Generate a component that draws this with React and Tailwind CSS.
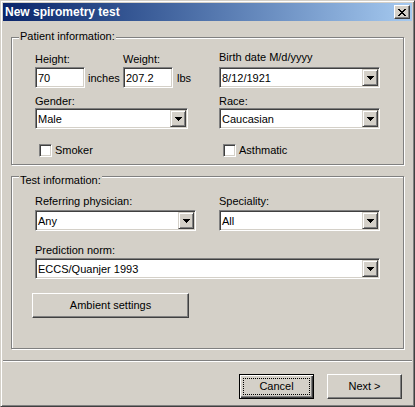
const sunken =
  'border border-t-[#808080] border-l-[#808080] border-r-white border-b-white shadow-[inset_1px_1px_0_#404040,inset_-1px_-1px_0_#d4d0c8]';
const raised =
  'border border-t-white border-l-white border-r-[#404040] border-b-[#404040] shadow-[inset_-1px_-1px_0_#808080]';
const dropRaised =
  'border border-t-[#d4d0c8] border-l-[#d4d0c8] border-r-[#404040] border-b-[#404040] shadow-[inset_1px_1px_0_#fff,inset_-1px_-1px_0_#808080]';
const etched = 'border border-[#808080] shadow-[inset_1px_1px_0_#fff,1px_1px_0_#fff]';

function CloseGlyph() {
  const rows = ['11000011', '01100110', '00111100', '00011000', '00111100', '01100110', '11000011'];
  return (
    <svg width="8" height="7" viewBox="0 0 8 7" shapeRendering="crispEdges">
      {rows.map((r, y) =>
        r.split('').map((c, x) => (c === '1' ? <rect key={`${x}-${y}`} x={x} y={y} width="1" height="1" fill="#000" /> : null))
      )}
    </svg>
  );
}

function Arrow() {
  return (
    <svg width="7" height="4" viewBox="0 0 7 4" shapeRendering="crispEdges">
      <rect x="0" y="0" width="7" height="1" fill="#000" />
      <rect x="1" y="1" width="5" height="1" fill="#000" />
      <rect x="2" y="2" width="3" height="1" fill="#000" />
      <rect x="3" y="3" width="1" height="1" fill="#000" />
    </svg>
  );
}

function Edit({ value, width }) {
  return (
    <div className={`${sunken} bg-white h-[21px] flex items-center pl-[2px] pt-px ${width}`}>
      <span className="leading-[13px]">{value}</span>
    </div>
  );
}

function Combo({ value, width }) {
  return (
    <div className={`${sunken} bg-white h-[21px] flex items-center p-px ${width}`}>
      <span className="flex-1 pl-px pt-[2px] leading-[13px]">{value}</span>
      <div className={`${dropRaised} w-[16px] h-[17px] flex items-center justify-center bg-[#d4d0c8]`}>
        <Arrow />
      </div>
    </div>
  );
}

function Check({ label }) {
  return (
    <div className="flex items-center gap-[3px] h-[13px]">
      <div className={`${sunken} bg-white w-[13px] h-[13px]`}></div>
      <span className="leading-[13px]">{label}</span>
    </div>
  );
}

function Label({ children, className = '' }) {
  return <div className={`leading-[13px] ${className}`}>{children}</div>;
}

function Group({ title, titleTop, className, children }) {
  return (
    <div className={`relative ml-[8px] w-[393px] pl-[23px] ${etched} ${className}`}>
      <span className={`absolute ${titleTop} left-[7px] px-px bg-[#d4d0c8] leading-[13px]`}>{title}</span>
      {children}
    </div>
  );
}

function Button({ children, width, isDefault }) {
  if (isDefault) {
    return (
      <div
        className={`${width} h-[25px] border border-black shadow-[inset_1px_1px_0_#fff,inset_-1px_-1px_0_#404040,inset_-2px_-2px_0_#808080] p-[3px] flex`}
      >
        <div className="flex-1 border border-dotted border-black flex items-center justify-center leading-[13px]">
          {children}
        </div>
      </div>
    );
  }
  return (
    <div className={`${raised} ${width} h-[25px] flex items-center justify-center leading-[13px]`}>{children}</div>
  );
}

export default function App() {
  return (
    <div className="w-[415px] h-[407px] bg-[#d4d0c8] border border-t-[#d4d0c8] border-l-[#d4d0c8] border-r-[#404040] border-b-[#404040] shadow-[inset_1px_1px_0_#fff,inset_-1px_-1px_0_#808080] p-[2px] flex flex-col font-['Liberation_Sans',Arial,sans-serif] text-[11px] text-black select-none">
      <div className="h-[18px] flex items-center bg-linear-to-r from-[#0a246a] to-[#a6caf0] pl-[2px] pr-[2px]">
        <span className="flex-1 text-white font-bold text-[12px] leading-[18px]">New spirometry test</span>
        <div className={`${raised} bg-[#d4d0c8] w-[16px] h-[14px] flex items-center justify-center`}>
          <CloseGlyph />
        </div>
      </div>

      <Group title="Patient information:" titleTop="-top-[8px]" className="mt-[16px] h-[128px] pt-[13px]">
        <div className="flex">
          <div className="w-[184px] flex items-end">
            <div className="w-[50px]">
              <Label className="mt-[2px] mb-px">Height:</Label>
              <Edit value="70" width="w-[50px]" />
            </div>
            <span className="w-[38px] pl-[3px] pb-[3px] leading-[13px]">inches</span>
            <div className="w-[50px]">
              <Label className="mt-[2px] mb-px">Weight:</Label>
              <Edit value="207.2" width="w-[50px]" />
            </div>
            <span className="pl-[4px] pb-[3px] leading-[13px]">lbs</span>
          </div>
          <div>
            <Label className="mb-[3px]">Birth date M/d/yyyy</Label>
            <Combo value="8/12/1921" width="w-[161px]" />
          </div>
        </div>

        <div className="flex mt-[7px]">
          <div className="w-[184px]">
            <Label>Gender:</Label>
            <Combo value="Male" width="w-[153px]" />
          </div>
          <div>
            <Label>Race:</Label>
            <Combo value="Caucasian" width="w-[161px]" />
          </div>
        </div>

        <div className="flex mt-[15px]">
          <div className="w-[184px] pl-[4px]">
            <Check label="Smoker" />
          </div>
          <div className="pl-[4px]">
            <Check label="Asthmatic" />
          </div>
        </div>
      </Group>

      <Group title="Test information:" titleTop="-top-[3px]" className="mt-[11px] h-[173px] pt-[18px]">
        <div className="flex">
          <div className="w-[184px]">
            <Label className="mb-[2px]">Referring physician:</Label>
            <Combo value="Any" width="w-[161px]" />
          </div>
          <div>
            <Label className="mb-[2px]">Speciality:</Label>
            <Combo value="All" width="w-[161px]" />
          </div>
        </div>

        <div className="mt-[13px]">
          <Label className="mb-px">Prediction norm:</Label>
          <Combo value="ECCS/Quanjer 1993" width="w-[345px]" />
        </div>

        <div className="mt-[14px] -ml-[3px]">
          <Button width="w-[157px]">Ambient settings</Button>
        </div>
      </Group>

      <div className="mt-[11px] h-[2px] border-t border-t-[#808080] border-b border-b-white"></div>

      <div className="mt-[12px] flex justify-end gap-[13px] pr-[10px]">
        <Button width="w-[75px]" isDefault>
          Cancel
        </Button>
        <Button width="w-[75px]">Next &gt;</Button>
      </div>
    </div>
  );
}
